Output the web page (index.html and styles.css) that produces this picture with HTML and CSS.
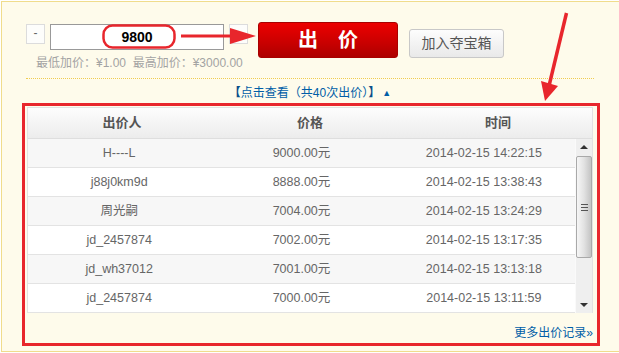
FILE: index.html
```html
<!DOCTYPE html>
<html lang="zh-CN">
<head>
<meta charset="utf-8">
<title>出价</title>
<link rel="stylesheet" href="styles.css">
</head>
<body>
<div class="panel">
  <div class="bid-row">
    <div class="bid-left">
      <div class="controls">
        <span class="step">-</span>
        <div class="amount">9800</div>
        <span class="step"></span>
      </div>
      <div class="limits">最低加价：¥1.00&nbsp; 最高加价：¥3000.00</div>
    </div>
    <div class="bid-btn">出<span class="gap"></span>价</div>
    <div class="fav-btn">加入夺宝箱</div>
  </div>
  <div class="dots"></div>
  <div class="toggle"><span class="br">【</span>点击查看（共40次出价）<span class="br">】</span><span class="tri">▲</span></div>
  <div class="bids">
    <div class="table">
      <div class="thead">
        <div class="cell">出价人</div>
        <div class="cell">价格</div>
        <div class="cell">时间</div>
      </div>
      <div class="tbody">
        <div class="rows">
          <div class="row odd"><div class="cell">H----L</div><div class="cell">9000.00元</div><div class="cell">2014-02-15 14:22:15</div></div>
          <div class="row"><div class="cell">j88j0km9d</div><div class="cell">8888.00元</div><div class="cell">2014-02-15 13:38:43</div></div>
          <div class="row odd"><div class="cell">周光嗣</div><div class="cell">7004.00元</div><div class="cell">2014-02-15 13:24:29</div></div>
          <div class="row"><div class="cell">jd_2457874</div><div class="cell">7002.00元</div><div class="cell">2014-02-15 13:17:35</div></div>
          <div class="row odd"><div class="cell">jd_wh37012</div><div class="cell">7001.00元</div><div class="cell">2014-02-15 13:13:18</div></div>
          <div class="row"><div class="cell">jd_2457874</div><div class="cell">7000.00元</div><div class="cell">2014-02-15 13:11:59</div></div>
        </div>
        <div class="sb">
          <div class="sb-btn"><span class="up"></span></div>
          <div class="sb-thumb"><span class="grip"></span></div>
          <div class="sb-track"></div>
          <div class="sb-btn"><span class="down"></span></div>
        </div>
      </div>
    </div>
    <div class="more">更多出价记录»</div>
  </div>
</div>
<svg class="marks" width="619" height="353" viewBox="0 0 619 353">
  <rect x="103.5" y="25.5" width="71" height="22" rx="9" fill="none" stroke="#e8262c" stroke-width="2.5"/>
  <line x1="181" y1="36" x2="234" y2="36" stroke="#e8262c" stroke-width="3"/>
  <polygon points="230,28 256,36 230,44" fill="#e8262c"/>
  <line x1="566.5" y1="13" x2="549" y2="86" stroke="#e8262c" stroke-width="3.5"/>
  <polygon points="541,81 558,86 545,101" fill="#e8262c"/>
</svg>
</body>
</html>
```
FILE: styles.css
```css
html, body {
  margin: 0;
  padding: 0;
  background: #fff;
}
body {
  position: relative;
  width: 619px;
  height: 353px;
  overflow: hidden;
  font-family: "Liberation Sans", "Noto Sans CJK SC", sans-serif;
}
.panel {
  box-sizing: border-box;
  margin: 1px 0 0 1px;
  height: 351px;
  width: 640px;
  border: 1px solid #f0dc8c;
  border-right: 0;
  background: #fefbeb;
  padding: 20px 0 0 24px;
}
.bid-row {
  display: flex;
  align-items: flex-start;
}
.bid-left {
  display: flex;
  flex-direction: column;
}
.controls {
  display: flex;
  margin-top: 2px;
  align-items: flex-start;
}
.step {
  box-sizing: border-box;
  width: 19px;
  height: 20px;
  border: 1px solid #dcdcdc;
  background: #fdfdfb;
  color: #666;
  font-size: 12px;
  line-height: 17px;
  text-align: center;
}
.amount {
  box-sizing: border-box;
  width: 174px;
  height: 26px;
  margin: 0 5px;
  border: 1px solid #999;
  background: #fff;
  font-size: 14px;
  font-weight: bold;
  color: #000;
  text-align: center;
  line-height: 24px;
}
.limits {
  margin-top: 6px;
  padding-left: 10px;
  font-size: 12px;
  line-height: 14px;
  color: #a3a3a3;
}
.bid-btn {
  box-sizing: border-box;
  margin-left: 10px;
  width: 140px;
  height: 36px;
  border: 1px solid #a80000;
  border-radius: 3px;
  background: linear-gradient(#ec0000, #c80000 60%, #ad0000);
  color: #fff;
  font-size: 20px;
  font-weight: bold;
  line-height: 34px;
  text-align: center;
}
.bid-btn .gap {
  display: inline-block;
  width: 20px;
}
.fav-btn {
  box-sizing: border-box;
  margin: 7px 0 0 11px;
  width: 95px;
  height: 29px;
  border: 1px solid #c8c8c8;
  border-radius: 3px;
  background: linear-gradient(#fdfdfd, #e9e9e9);
  color: #555;
  font-size: 14px;
  line-height: 27px;
  text-align: center;
}
.dots {
  width: 568px;
  margin-top: 8px;
  border-top: 1px dotted #f0cc50;
}
.toggle {
  width: 568px;
  margin-top: 7px;
  text-align: center;
  font-size: 12px;
  line-height: 14px;
  color: #005ea7;
}
.toggle .br {
  font-weight: bold;
  color: #0a4f8a;
}
.toggle .tri {
  font-size: 9px;
  margin-left: 2px;
  vertical-align: 1px;
}
.bids {
  box-sizing: border-box;
  width: 578px;
  margin: 3px 0 0 -4px;
  border: 3px solid #e8262c;
  padding: 1px 4px 3px 2px;
}
.table {
  border: 1px solid #e2e2e2;
  border-bottom: 0;
  background: #fff;
}
.thead {
  display: flex;
  height: 30px;
  border-bottom: 1px solid #dedede;
  background: linear-gradient(#fdfdfd, #ececec);
}
.thead .cell {
  flex: 1;
  text-align: center;
  font-size: 13px;
  font-weight: bold;
  color: #555;
  line-height: 30px;
}
.tbody {
  display: flex;
}
.rows {
  flex: 1;
}
.row {
  display: flex;
  height: 28px;
  border-bottom: 1px solid #e3e3e3;
  background: #fff;
}
.row.odd {
  background: #f7f7f7;
}
.row .cell {
  flex: 1;
  text-align: center;
  font-size: 12.5px;
  color: #666;
  line-height: 28px;
}
.sb {
  width: 16px;
  display: flex;
  flex-direction: column;
  background: #efefef;
  border-left: 1px solid #fafafa;
}
.sb-btn {
  height: 17px;
  position: relative;
}
.sb-btn span {
  position: absolute;
  left: 4px;
  width: 0;
  height: 0;
  border-left: 4px solid transparent;
  border-right: 4px solid transparent;
}
.sb-btn .up {
  top: 6px;
  border-bottom: 4px solid #333;
}
.sb-btn .down {
  top: 7px;
  border-top: 4px solid #333;
}
.sb-thumb {
  box-sizing: border-box;
  height: 102px;
  border: 1px solid #a9a9a9;
  border-radius: 2px;
  background: linear-gradient(90deg, #f6f6f6, #e2e2e2 50%, #c4c4c4);
  display: flex;
  align-items: center;
  justify-content: center;
}
.grip {
  width: 7px;
  height: 5px;
  border-top: 1px solid #555;
  border-bottom: 1px solid #555;
  position: relative;
}
.grip::after {
  content: "";
  position: absolute;
  left: 0;
  right: 0;
  top: 2px;
  border-top: 1px solid #555;
}
.sb-track {
  flex: 1;
}
.more {
  margin-top: 13px;
  text-align: right;
  font-size: 12px;
  line-height: 14px;
  color: #005ea7;
}
.marks {
  position: absolute;
  left: 0;
  top: 0;
  pointer-events: none;
}
```
